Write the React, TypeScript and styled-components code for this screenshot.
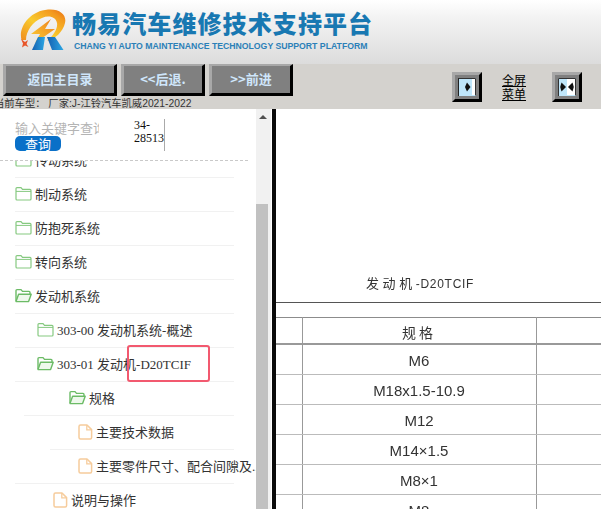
import React from "react";
import styled, { createGlobalStyle } from "styled-components";

const GlobalStyle = createGlobalStyle`
  html, body {
    margin: 0;
    padding: 0;
    background: #fff;
    overflow: hidden;
  }
  body {
    font-family: "Liberation Sans", "Noto Sans CJK SC", sans-serif;
  }
`;

const Page = styled.div`
  width: 601px;
  height: 509px;
  display: flex;
  flex-direction: column;
  overflow: hidden;
`;

const Header = styled.div`
  height: 64px;
  flex: none;
  display: flex;
  padding: 9px 0 0 20px;
  box-sizing: border-box;
  gap: 6px;
  background: linear-gradient(#ffffff 0%, #f4f4f4 25%, #dcdcdc 100%);
`;

const BrandText = styled.div`
  display: flex;
  flex-direction: column;
`;

const Title = styled.div`
  font-family: "Noto Sans CJK SC", sans-serif;
  font-weight: 900;
  font-size: 24px;
  line-height: 30px;
  letter-spacing: 1.1px;
  margin-top: -1px;
  color: #1878b2;
  white-space: nowrap;
`;

const Subtitle = styled.div`
  font-weight: bold;
  font-size: 8.7px;
  line-height: 11px;
  margin: 3px 0 0 2px;
  color: #2b80b8;
  white-space: nowrap;
`;

const Toolbar = styled.div`
  height: 45px;
  flex: none;
  background: #d4d2ce;
  overflow: hidden;
`;

const ButtonRow = styled.div`
  display: flex;
  align-items: flex-start;
  height: 32px;
  padding-left: 3px;
  gap: 4px;
`;

const NavButton = styled.button<{ $w: number }>`
  width: ${(p) => p.$w}px;
  height: 32px;
  box-sizing: border-box;
  padding: 0 0 2px;
  background: #808080;
  border-style: solid;
  border-width: 2px 3px 3px 3px;
  border-color: #a8a8a8 #000 #000 #a8a8a8;
  color: #cfe6fb;
  font-family: "Noto Sans CJK SC", sans-serif;
  font-weight: bold;
  font-size: 13px;
`;

const ToolIcon = styled.button`
  width: 30px;
  height: 30px;
  margin-top: 8px;
  box-sizing: border-box;
  padding: 0;
  background: #808080;
  border-style: solid;
  border-width: 3px;
  border-color: #a8a8a8 #000 #000 #a8a8a8;
  display: flex;
  align-items: center;
  justify-content: center;
`;

const FullMenu = styled.a`
  width: 24px;
  margin: 9px 26px 0 20px;
  font-family: "Noto Sans CJK SC", sans-serif;
  font-size: 12px;
  line-height: 14px;
  color: #000;
  text-decoration: underline;
`;

const IconGroup = styled.div`
  display: flex;
  margin-left: 155px;
`;

const CarLine = styled.div`
  font-family: "Liberation Sans", "Noto Sans CJK SC", sans-serif;
  font-size: 10.3px;
  line-height: 13px;
  margin: 1px 0 0 -6px;
  color: #333;
  white-space: nowrap;
`;

const Body = styled.div`
  flex: 1;
  display: flex;
  min-height: 0;
`;

const Sidebar = styled.div`
  width: 256px;
  flex: none;
  display: flex;
  flex-direction: column;
  overflow: hidden;
`;

const SearchBar = styled.div`
  height: 52px;
  flex: none;
  box-sizing: border-box;
  padding: 10px 0 0 15px;
  display: flex;
  border-bottom: 1px dashed #c9c9c9;
  margin-right: 8px;
`;

const SearchLeft = styled.div`
  width: 119px;
  display: flex;
  flex-direction: column;
`;

const Placeholder = styled.div`
  width: 84px;
  overflow: hidden;
  white-space: nowrap;
  font-family: "Noto Sans CJK SC", sans-serif;
  font-size: 13px;
  line-height: 17px;
  color: #b4b4b4;
`;

const SearchButton = styled.button`
  width: 46px;
  height: 15px;
  padding: 0;
  border: none;
  border-radius: 5px;
  background: #0a70c8;
  color: #fff;
  font-family: "Noto Sans CJK SC", sans-serif;
  font-size: 13px;
  line-height: 15px;
`;

const PartNo = styled.div`
  width: 30px;
  height: 32px;
  border-right: 1px solid #aaa;
  font-family: "Liberation Serif", serif;
  font-size: 12px;
  line-height: 13px;
  color: #111;
`;

const TreeViewport = styled.div`
  flex: 1;
  overflow: hidden;
  min-height: 0;
  position: relative;
`;

const Tree = styled.div`
  margin-top: -17px;
`;

const Row = styled.div<{ $indent: number; $lineFrom: number }>`
  height: 34px;
  box-sizing: border-box;
  display: flex;
  align-items: center;
  gap: 3px;
  padding: 0 0 3px ${(p) => p.$indent}px;
  white-space: nowrap;
  font-family: "Liberation Serif", "Noto Sans CJK SC", serif;
  font-size: 13px;
  color: #333;
  position: relative;
  & > svg {
    flex: none;
  }
  &::after {
    content: "";
    position: absolute;
    left: ${(p) => p.$lineFrom}px;
    width: ${(p) => 234 - p.$lineFrom}px;
    bottom: 0;
    height: 1px;
    background: #f1f1f1;
  }
`;

const Highlight = styled.div`
  position: absolute;
  left: 127px;
  top: 184px;
  width: 83px;
  height: 37px;
  box-sizing: border-box;
  border: 2px solid #f2596f;
  border-radius: 3px;
`;

const ScrollTrack = styled.div`
  width: 15px;
  flex: none;
  background: #f1f1f1;
  display: flex;
  flex-direction: column;
  align-items: flex-start;
`;

const ScrollArrow = styled.div`
  width: 13px;
  height: 95px;
  display: flex;
  justify-content: center;
  padding-top: 6px;
  box-sizing: border-box;
  &::before {
    content: "";
    width: 0;
    height: 0;
    border-left: 4px solid transparent;
    border-right: 4px solid transparent;
    border-bottom: 4px solid #505050;
  }
`;

const ScrollThumb = styled.div`
  width: 12px;
  flex: 1;
  background: #c1c1c1;
`;

const Divider = styled.div`
  width: 4px;
  flex: none;
  margin-left: 1px;
  background: #0a0a0a;
`;

const Content = styled.div`
  flex: 1;
  min-width: 0;
  overflow: hidden;
  background: #fff;
  filter: blur(0.3px);
`;

const DocTitle = styled.div`
  height: 194px;
  box-sizing: border-box;
  padding: 165px 0 0 90px;
  border-bottom: 1px solid #555;
  font-size: 12px;
  line-height: 20px;
  letter-spacing: 0.7px;
  color: #333;
  white-space: nowrap;
`;

const DocTitleCjk = styled.span`
  font-size: 13px;
  letter-spacing: 3.6px;
`;

const SpecTable = styled.table`
  margin-top: 14px;
  width: 326px;
  table-layout: fixed;
  border-collapse: collapse;
  border-top: 1px solid #8c8c8c;
  font-size: 15px;
  color: #333;
`;

const Cell = styled.td<{ $head?: boolean }>`
  height: ${(p) => (p.$head ? 23 : 27)}px;
  padding: 2px 0 0;
  text-align: center;
  border-bottom: ${(p) => (p.$head ? "2px solid #999" : "1px solid #bbb")};
  border-right: 1px solid #999;
  font-size: ${(p) => (p.$head ? "14px" : "15px")};
  letter-spacing: ${(p) => (p.$head ? "3px" : "0")};
  &:last-child {
    border-right: none;
  }
`;

const FolderClosed = () => (
  <svg width="17" height="15" viewBox="0 0 17 15" fill="none">
    <path
      d="M1 13V2.5C1 2 1.4 1.6 2 1.6H6L7.5 3.4H15C15.6 3.4 16 3.8 16 4.4V13C16 13.6 15.6 14 15 14H2C1.4 14 1 13.6 1 13Z"
      stroke="#86c980"
      strokeWidth="1.2"
      fill="#fff"
    />
    <path d="M1 5.4H16" stroke="#86c980" strokeWidth="1" />
  </svg>
);

const FolderOpen = () => (
  <svg width="17" height="15" viewBox="0 0 17 15" fill="none">
    <path
      d="M1 13V2.5C1 2 1.4 1.6 2 1.6H6L7.5 3.4H14C14.6 3.4 15 3.8 15 4.4V6"
      stroke="#6cbb66"
      strokeWidth="1.4"
    />
    <path
      d="M1 13.6L3.6 6.2H16.2L13.6 13.6H1Z"
      stroke="#6cbb66"
      strokeWidth="1.4"
      strokeLinejoin="round"
      fill="#eef8ec"
    />
  </svg>
);

const FileIcon = () => (
  <svg width="15" height="16" viewBox="0 0 15 16" fill="none">
    <path
      d="M2.5 1H9L13.6 5.6V13.5C13.6 14.3 13 15 12.2 15H2.5C1.7 15 1 14.3 1 13.5V2.5C1 1.7 1.7 1 2.5 1Z"
      stroke="#f6cc9c"
      strokeWidth="1.5"
      strokeLinejoin="round"
    />
    <path d="M8.8 1V5.8H13.6" stroke="#f6cc9c" strokeWidth="1.3" />
  </svg>
);

const Logo = () => (
  <svg width="46" height="42" viewBox="0 0 46 42">
    <defs>
      <linearGradient id="swoosh" x1="0" y1="1" x2="1" y2="0">
        <stop offset="0" stopColor="#ef8a1e" />
        <stop offset="0.45" stopColor="#f9cb2e" />
        <stop offset="0.8" stopColor="#f39a1e" />
        <stop offset="1" stopColor="#e86a14" />
      </linearGradient>
      <linearGradient id="bolt" x1="0" y1="1" x2="1" y2="0">
        <stop offset="0" stopColor="#fbd23a" />
        <stop offset="1" stopColor="#ee7d18" />
      </linearGradient>
      <linearGradient id="rblue" x1="0" y1="0" x2="1" y2="0">
        <stop offset="0" stopColor="#1560b0" />
        <stop offset="1" stopColor="#2aa6e4" />
      </linearGradient>
    </defs>
    <path
      d="M1.5 31C-2 18 10 2 28 0.5C40 -0.5 47 6 45 14C43 23 35 30 27 32C33 27 38 20 37 14C36 8 29 6 22 9C13 12 6 22 6 31Z"
      fill="url(#swoosh)"
    />
    <path d="M31 10L11 25L20 25L15 34L35 20L25 20Z" fill="url(#bolt)" />
    <path d="M1 30L5 33L8 31L6.5 35L8.5 38L5 36.5L2 38.5L3 34.5Z" fill="#e8552a" />
    <path d="M18 28H25L23 41H12Z" fill="url(#rblue)" />
    <path d="M27 28H35L43.5 41H32Z" fill="url(#rblue)" />
  </svg>
);

const PanelRight = () => (
  <svg width="18" height="18" viewBox="0 0 18 18">
    <rect width="18" height="18" fill="#bfe6fa" />
    <path d="M0 0.5H17.5V17.5" fill="none" stroke="#333" />
    <path d="M0.5 18V0.5" stroke="#222" />
    <rect x="14" y="1" width="3" height="16" fill="#fff" />
    <path d="M9 4.5L12.5 9L9 13.5L7 9Z" fill="#111" />
  </svg>
);

const PanelBoth = () => (
  <svg width="18" height="18" viewBox="0 0 18 18">
    <rect width="18" height="18" fill="#bfe6fa" />
    <rect x="9" y="1" width="8" height="16" fill="#fff" />
    <path d="M0.5 18V0.5H17.5V17.5" fill="none" stroke="#333" />
    <path d="M3.5 4.5L8 9L3.5 13.5L2.2 9Z" fill="#111" />
    <path d="M14.5 4.5L10 9L14.5 13.5L15.8 9Z" fill="#111" />
  </svg>
);

const treeRows = [
  { icon: <FolderClosed />, text: "传动系统", indent: 15, line: 15 },
  { icon: <FolderClosed />, text: "制动系统", indent: 15, line: 15 },
  { icon: <FolderClosed />, text: "防抱死系统", indent: 15, line: 15 },
  { icon: <FolderClosed />, text: "转向系统", indent: 15, line: 15 },
  { icon: <FolderOpen />, text: "发动机系统", indent: 15, line: 15 },
  { icon: <FolderClosed />, text: "303-00 发动机系统-概述", indent: 37, line: 15 },
  { icon: <FolderOpen />, text: "303-01 发动机-D20TCIF", indent: 37, line: 15 },
  { icon: <FolderOpen />, text: "规格", indent: 69, line: 24 },
  { icon: <FileIcon />, text: "主要技术数据", indent: 78, line: 50 },
  { icon: <FileIcon />, text: "主要零件尺寸、配合间隙及...", indent: 78, line: 15 },
  { icon: <FileIcon />, text: "说明与操作", indent: 53, line: 15 },
];

const specs = ["M6", "M18x1.5-10.9", "M12", "M14×1.5", "M8×1", "M8"];

export default function App() {
  return (
    <Page>
      <GlobalStyle />
      <Header>
        <Logo />
        <BrandText>
          <Title>畅易汽车维修技术支持平台</Title>
          <Subtitle>CHANG YI AUTO MAINTENANCE TECHNOLOGY SUPPORT PLATFORM</Subtitle>
        </BrandText>
      </Header>
      <Toolbar>
        <ButtonRow>
          <NavButton $w={114}>返回主目录</NavButton>
          <NavButton $w={84}>&lt;&lt;后退.</NavButton>
          <NavButton $w={84}>&gt;&gt;前进</NavButton>
          <IconGroup>
            <ToolIcon>
              <PanelRight />
            </ToolIcon>
            <FullMenu>全屏菜单</FullMenu>
            <ToolIcon>
              <PanelBoth />
            </ToolIcon>
          </IconGroup>
        </ButtonRow>
        <CarLine>当前车型： 厂家:J-江铃汽车凯威2021-2022</CarLine>
      </Toolbar>
      <Body>
        <Sidebar>
          <SearchBar>
            <SearchLeft>
              <Placeholder>输入关键字查询</Placeholder>
              <SearchButton>查询</SearchButton>
            </SearchLeft>
            <PartNo>34-28513</PartNo>
          </SearchBar>
          <TreeViewport>
            <Tree>
              {treeRows.map((r) => (
                <Row key={r.text} $indent={r.indent} $lineFrom={r.line}>
                  {r.icon}
                  <span>{r.text}</span>
                </Row>
              ))}
            </Tree>
            <Highlight />
          </TreeViewport>
        </Sidebar>
        <ScrollTrack>
          <ScrollArrow />
          <ScrollThumb />
        </ScrollTrack>
        <Divider />
        <Content>
          <DocTitle>
            <DocTitleCjk>发动机</DocTitleCjk>-D20TCIF
          </DocTitle>
          <SpecTable>
            <colgroup>
              <col style={{ width: 26 }} />
              <col style={{ width: 234 }} />
              <col />
            </colgroup>
            <tbody>
              <tr>
                <Cell $head />
                <Cell $head>规格</Cell>
                <Cell $head />
              </tr>
              {specs.map((s) => (
                <tr key={s}>
                  <Cell />
                  <Cell>{s}</Cell>
                  <Cell />
                </tr>
              ))}
            </tbody>
          </SpecTable>
        </Content>
      </Body>
    </Page>
  );
}
